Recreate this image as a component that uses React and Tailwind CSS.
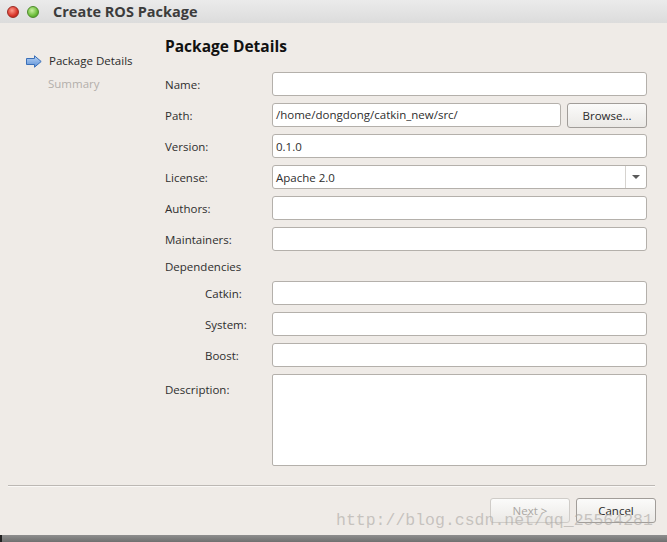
import React from 'react';

const font = { fontFamily: '"Open Sans", "Noto Sans", sans-serif' };

const Field = ({ value = '', className = '' }) => (
  <div className={`h-[24px] bg-white border border-[#b4b0ab] rounded-[3px] flex items-center px-[3px] pt-[1px] text-[11.5px] text-[#2e2e2e] ${className}`}>
    {value}
  </div>
);

const Row = ({ label, indent, children }) => (
  <div className="flex items-center h-[24px]">
    <div className={`w-[107px] shrink-0 pt-[2px] text-[11.5px] text-[#2e2e2e] ${indent ? 'pl-[40px]' : ''}`}>{label}</div>
    <div className="flex-1 flex gap-[6px]">{children}</div>
  </div>
);

const Button = ({ children, disabled }) => (
  <button
    className={`w-[80px] h-[25px] rounded-[3px] border text-[11.5px] pt-[1px] bg-gradient-to-b from-[#fbfbfa] to-[#ebe9e6] ${
      disabled ? 'border-[#cfccc8] text-[#aaa7a3]' : 'border-[#a19d99] text-[#2a2a2a]'
    }`}
  >
    {children}
  </button>
);

const ArrowIcon = () => (
  <svg width="16" height="13" viewBox="0 0 16 13">
    <defs>
      <linearGradient id="ag" x1="0" y1="0" x2="0" y2="1">
        <stop offset="0" stopColor="#b9d4f5" />
        <stop offset="1" stopColor="#5b8fd6" />
      </linearGradient>
    </defs>
    <path d="M0.5 3.5 H8.5 V0.8 L15.2 6.5 L8.5 12.2 V9.5 H0.5 Z" fill="url(#ag)" stroke="#3a6fb8" strokeWidth="1" strokeLinejoin="round" />
  </svg>
);

export default function App() {
  return (
    <div className="relative w-[667px] h-[542px] flex flex-col overflow-hidden bg-[#efebe7]" style={font}>
      {/* Title bar */}
      <div className="h-[23px] shrink-0 flex items-center bg-gradient-to-b from-[#ebebeb] to-[#dcdcdc]">
        <div className="ml-[7px] w-[12px] h-[12px] rounded-full bg-[radial-gradient(circle_at_40%_35%,#ff9a8a,#d8352a_60%,#a0221a)] border border-[#9b2a22]" />
        <div className="ml-[8px] w-[12px] h-[12px] rounded-full bg-[radial-gradient(circle_at_40%_35%,#c9f0a0,#6cbd3a_60%,#3f8a20)] border border-[#4d8a2a]" />
        <div className="ml-[14px] text-[14.5px] font-bold text-[#3c3c3c]">Create ROS Package</div>
      </div>

      {/* Body */}
      <div className="flex-1 flex">
        <div className="w-[165px] shrink-0 pt-[30px] pl-[26px]">
          <div className="flex items-center gap-[7px] h-[16px]">
            <ArrowIcon />
            <span className="text-[11.5px] text-[#2a2a2a]">Package Details</span>
          </div>
          <div className="mt-[6px] pl-[22px] text-[11.5px] text-[#b3afab]">Summary</div>
        </div>

        <div className="flex-1 pr-[20px] pt-[12px]">
          <div className="text-[15.5px] font-bold text-[#111] h-[22px] leading-[22px]">Package Details</div>
          <div className="mt-[15px] flex flex-col gap-[7px]">
            <Row label="Name:"><Field className="flex-1" /></Row>
            <Row label="Path:">
              <Field className="flex-1" value="/home/dongdong/catkin_new/src/" />
              <Button>Browse...</Button>
            </Row>
            <Row label="Version:"><Field className="flex-1" value="0.1.0" /></Row>
            <Row label="License:">
              <div className="flex-1 h-[24px] bg-white border border-[#b4b0ab] rounded-[3px] flex items-center text-[11.5px] text-[#2e2e2e]">
                <span className="flex-1 px-[3px] pt-[1px]">Apache 2.0</span>
                <div className="w-[21px] h-full border-l border-[#d6d3cf] flex items-center justify-center">
                  <div className="w-0 h-0 border-l-[4px] border-r-[4px] border-t-[4px] border-l-transparent border-r-transparent border-t-[#5a5a5a]" />
                </div>
              </div>
            </Row>
            <Row label="Authors:"><Field className="flex-1" /></Row>
            <Row label="Maintainers:"><Field className="flex-1" /></Row>
            <div className="h-[16px] flex items-center pt-[2px] text-[11.5px] text-[#2e2e2e]">Dependencies</div>
            <Row label="Catkin:" indent><Field className="flex-1" /></Row>
            <Row label="System:" indent><Field className="flex-1" /></Row>
            <Row label="Boost:" indent><Field className="flex-1" /></Row>
            <div className="flex">
              <div className="w-[107px] shrink-0 pt-[7px] text-[11.5px] text-[#2e2e2e]">Description:</div>
              <div className="flex-1 h-[92px] bg-white border border-[#b4b0ab] rounded-[2px]" />
            </div>
          </div>
        </div>
      </div>

      {/* Footer */}
      <div className="shrink-0 px-[8px]">
        <div className="mr-[4px] border-t border-[#bcb8b4] border-b border-b-[#faf8f6]" />
        <div className="flex justify-end gap-[6px] pt-[11px] pb-[12px] pr-[3px]">
          <Button disabled>Next &gt;</Button>
          <Button>Cancel</Button>
        </div>
      </div>

      <div className="h-[7px] shrink-0 bg-gradient-to-b from-[#8e8e8e] to-[#707070] border-l-2 border-[#222]" />

      {/* Watermark */}
      <div
        className="absolute left-[336px] top-[509px] text-[16.5px] text-[#aaa6a2]/60 pointer-events-none whitespace-nowrap"
        style={{ fontFamily: '"Liberation Mono", monospace' }}
      >
        http://blog.csdn.net/qq_25564281
      </div>
    </div>
  );
}
